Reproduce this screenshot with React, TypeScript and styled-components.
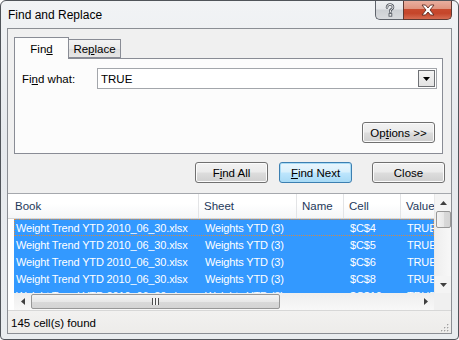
import React from 'react'
import styled, { createGlobalStyle } from 'styled-components'

const GlobalStyle = createGlobalStyle`
  html, body {
    margin: 0;
    padding: 0;
    background: #ffffff;
  }
  body {
    font-family: "Liberation Sans", Arial, sans-serif;
    font-size: 11px;
    color: #000;
  }
  * {
    box-sizing: border-box;
  }
`

const rows = [
  { book: 'Weight Trend YTD 2010_06_30.xlsx', sheet: 'Weights YTD (3)', name: '', cell: '$C$4', value: 'TRUE' },
  { book: 'Weight Trend YTD 2010_06_30.xlsx', sheet: 'Weights YTD (3)', name: '', cell: '$C$5', value: 'TRUE' },
  { book: 'Weight Trend YTD 2010_06_30.xlsx', sheet: 'Weights YTD (3)', name: '', cell: '$C$6', value: 'TRUE' },
  { book: 'Weight Trend YTD 2010_06_30.xlsx', sheet: 'Weights YTD (3)', name: '', cell: '$C$8', value: 'TRUE' },
  { book: 'Weight Trend YTD 2010_06_30.xlsx', sheet: 'Weights YTD (3)', name: '', cell: '$C$10', value: 'TRUE' },
]

const columns = [
  { key: 'book', title: 'Book', width: 191 },
  { key: 'sheet', title: 'Sheet', width: 98 },
  { key: 'name', title: 'Name', width: 47 },
  { key: 'cell', title: 'Cell', width: 57 },
  { key: 'value', title: 'Value', width: 60 },
]

const HelpIcon = () => (
  <svg width="12" height="14" viewBox="0 0 12 14">
    <path
      d="M3 4.5 C3 2.5 4.5 1.5 6 1.5 C7.8 1.5 9 2.6 9 4.2 C9 5.8 7.2 6.3 6.4 7.3 L6.4 9"
      fill="none"
      stroke="#555a62"
      strokeWidth="2.6"
      strokeLinecap="round"
    />
    <path
      d="M3 4.5 C3 2.5 4.5 1.5 6 1.5 C7.8 1.5 9 2.6 9 4.2 C9 5.8 7.2 6.3 6.4 7.3 L6.4 9"
      fill="none"
      stroke="#f4f4f4"
      strokeWidth="1"
      strokeLinecap="round"
    />
    <rect x="5" y="10.6" width="2.8" height="2.6" fill="#f4f4f4" stroke="#555a62" strokeWidth="0.9" />
  </svg>
)

const CloseIcon = () => (
  <svg width="16" height="12" viewBox="0 0 16 12">
    <path
      d="M2 1 L5.5 1 L8 4 L10.5 1 L14 1 L10 6 L14 11 L10.5 11 L8 8 L5.5 11 L2 11 L6 6 Z"
      fill="#ffffff"
      stroke="#5b2b22"
      strokeWidth="0.9"
      strokeLinejoin="round"
    />
  </svg>
)

const ArrowDown = () => (
  <svg width="7" height="4" viewBox="0 0 7 4">
    <path d="M0 0 L7 0 L3.5 4 Z" fill="#000" />
  </svg>
)

const ScrollArrow = ({ dir }: { dir: 'up' | 'down' | 'left' | 'right' }) => {
  const paths: Record<string, string> = {
    up: 'M0 4 L7 4 L3.5 0 Z',
    down: 'M0 0 L7 0 L3.5 4 Z',
    left: 'M4 0 L4 7 L0 3.5 Z',
    right: 'M0 0 L0 7 L4 3.5 Z',
  }
  const horiz = dir === 'left' || dir === 'right'
  return (
    <svg width={horiz ? 4 : 7} height={horiz ? 7 : 4} viewBox={horiz ? '0 0 4 7' : '0 0 7 4'}>
      <path d={paths[dir]} fill="#404040" />
    </svg>
  )
}

const App: React.FC = () => {
  return (
    <>
      <GlobalStyle />
      <Window>
        <TitleBar>
          <Title>Find and Replace</Title>
          <Caption>
            <HelpButton>
              <HelpIcon />
            </HelpButton>
            <CloseButton>
              <CloseIcon />
            </CloseButton>
          </Caption>
        </TitleBar>

        <Client>
          <TabSection>
            <TabStrip>
              <Tab $active>
                Fin<u>d</u>
              </Tab>
              <Tab>
                Re<u>p</u>lace
              </Tab>
            </TabStrip>
            <TabPanel>
              <FindRow>
                <FieldLabel>
                  Fi<u>n</u>d what:
                </FieldLabel>
                <Combo>
                  <ComboText>TRUE</ComboText>
                  <ComboButton>
                    <ArrowDown />
                  </ComboButton>
                </Combo>
              </FindRow>
              <OptionsRow>
                <Button $width={73}>
                  Op<u>t</u>ions &gt;&gt;
                </Button>
              </OptionsRow>
            </TabPanel>
          </TabSection>

          <ButtonRow>
            <Button $width={73}>
              F<u>i</u>nd All
            </Button>
            <Button $width={73} $default>
              <u>F</u>ind Next
            </Button>
            <Button $width={73} $gapLeft={9}>
              Close
            </Button>
          </ButtonRow>

          <ListBox>
            <ListMain>
              <ListView>
                <HeaderRow>
                  {columns.map((c, i) => (
                    <HeaderCell key={c.key} style={{ width: c.width }} $first={i === 0}>
                      {c.title}
                    </HeaderCell>
                  ))}
                </HeaderRow>
                <Rows>
                  {rows.map((r, idx) => (
                    <Row key={idx} $focused={idx === 0}>
                      {columns.map((c, i) => (
                        <Cell key={c.key} style={{ width: i === 0 ? c.width - 6 : c.width }} $first={i === 0}>
                          {(r as Record<string, string>)[c.key]}
                        </Cell>
                      ))}
                    </Row>
                  ))}
                </Rows>
              </ListView>
              <VScroll>
                <ArrowBox>
                  <ScrollArrow dir="up" />
                </ArrowBox>
                <VTrack>
                  <VThumb />
                </VTrack>
                <ArrowBox>
                  <ScrollArrow dir="down" />
                </ArrowBox>
              </VScroll>
            </ListMain>
            <HScrollRow>
              <HScroll>
                <ArrowBox>
                  <ScrollArrow dir="left" />
                </ArrowBox>
                <HTrack>
                  <HThumb>
                    <Grip />
                  </HThumb>
                </HTrack>
                <ArrowBox>
                  <ScrollArrow dir="right" />
                </ArrowBox>
              </HScroll>
              <Corner />
            </HScrollRow>
          </ListBox>

          <StatusBar>
            <StatusText>145 cell(s) found</StatusText>
            <SizeGrip>
              <svg width="10" height="10" viewBox="0 0 10 10">
                {[
                  [8, 2],
                  [5, 5],
                  [8, 5],
                  [2, 8],
                  [5, 8],
                  [8, 8],
                ].map(([x, y], i) => (
                  <React.Fragment key={i}>
                    <rect x={x + 0.6} y={y + 0.6} width="1.4" height="1.4" fill="#ffffff" />
                    <rect x={x} y={y} width="1.4" height="1.4" fill="#a0a0a0" />
                  </React.Fragment>
                ))}
              </svg>
            </SizeGrip>
          </StatusBar>
        </Client>
      </Window>
    </>
  )
}

const Window = styled.div`
  width: 459px;
  height: 340px;
  display: flex;
  flex-direction: column;
  border: 1px solid #50545a;
  border-radius: 6px 6px 4px 4px;
  background: linear-gradient(180deg, #f1f3f5 0%, #e6e9ed 40%, #e9ecef 100%);
  padding: 0 6px 5px 6px;
  overflow: hidden;
`

const TitleBar = styled.div`
  height: 27px;
  display: flex;
  justify-content: space-between;
  align-items: flex-start;
`

const Title = styled.div`
  padding: 7px 0 0 1px;
  font-size: 12px;
  line-height: 15px;
  color: #000;
`

const Caption = styled.div`
  display: flex;
  margin-top: -1px;
  margin-right: 0;
`

const HelpButton = styled.div`
  width: 28px;
  height: 20px;
  display: flex;
  align-items: center;
  justify-content: center;
  border: 1px solid #5f646c;
  border-top: none;
  border-right: none;
  border-radius: 0 0 0 5px;
  background: linear-gradient(180deg, #eef0f2 0%, #e4e6e9 48%, #cdd0d4 52%, #d9dbde 100%);
`

const CloseButton = styled.div`
  width: 49px;
  height: 20px;
  display: flex;
  align-items: center;
  justify-content: center;
  border: 1px solid #5f3a33;
  border-top: none;
  border-radius: 0 0 5px 0;
  background: linear-gradient(180deg, #eab2a3 0%, #e09580 45%, #c84a2e 50%, #c5452a 70%, #d66c52 100%);
`

const Client = styled.div`
  flex: 1;
  display: flex;
  flex-direction: column;
  border: 1px solid #8b8e94;
  background: #f0f0f0;
  min-height: 0;
`

const TabSection = styled.div`
  margin: 8px 8px 0 6px;
  display: flex;
  flex-direction: column;
`

const TabStrip = styled.div`
  display: flex;
  align-items: flex-end;
  height: 21px;
  position: relative;
  z-index: 1;
`

const Tab = styled.div<{ $active?: boolean }>`
  display: flex;
  align-items: center;
  justify-content: center;
  width: ${(p) => (p.$active ? 55 : 52)}px;
  height: ${(p) => (p.$active ? 22 : 19)}px;
  margin-bottom: ${(p) => (p.$active ? -1 : 0)}px;
  border: 1px solid #898c95;
  border-bottom: ${(p) => (p.$active ? 'none' : '1px solid #898c95')};
  border-left: ${(p) => (p.$active ? '1px solid #898c95' : 'none')};
  background: ${(p) => (p.$active ? '#fcfcfc' : 'linear-gradient(180deg, #f3f3f3 0%, #ebebeb 50%, #dedede 51%, #e6e6e6 100%)')};
  padding-top: ${(p) => (p.$active ? 0 : 1)}px;
  font-size: 11.5px;
  line-height: 14px;
`

const TabPanel = styled.div`
  height: 96px;
  display: flex;
  flex-direction: column;
  border: 1px solid #898c95;
  background: #fcfcfc;
  padding: 9px 5px 0 7px;
`

const FindRow = styled.div`
  display: flex;
  align-items: center;
  height: 21px;
`

const FieldLabel = styled.div`
  width: 75px;
  font-size: 11.5px;
`

const Combo = styled.div`
  flex: 1;
  height: 21px;
  display: flex;
  align-items: center;
  justify-content: space-between;
  border: 1px solid #a3a6ab;
  background: #ffffff;
  padding: 0 1px 0 3px;
`

const ComboText = styled.span`
  font-size: 11.5px;
`

const ComboButton = styled.div`
  width: 17px;
  height: 17px;
  display: flex;
  align-items: center;
  justify-content: center;
  border: 1px solid #6f7175;
  background: linear-gradient(180deg, #f4f4f4 0%, #e3e3e3 100%);
`

const OptionsRow = styled.div`
  margin-top: auto;
  margin-bottom: 10px;
  padding-right: 2px;
  display: flex;
  justify-content: flex-end;
`

const Button = styled.div<{ $width: number; $default?: boolean; $gapLeft?: number }>`
  width: ${(p) => p.$width}px;
  height: 21px;
  margin-left: ${(p) => p.$gapLeft ?? 0}px;
  display: flex;
  align-items: center;
  justify-content: center;
  border: 1px solid ${(p) => (p.$default ? '#3c7fb1' : '#707070')};
  border-radius: 3px;
  box-shadow: ${(p) => (p.$default ? 'inset 0 0 0 1px #a9dcf6' : 'inset 0 0 0 1px #fbfbfb')};
  background: ${(p) =>
    p.$default
      ? 'linear-gradient(180deg, #eaf6fd 0%, #d9f0fc 48%, #bee6fd 52%, #a7d9f5 100%)'
      : 'linear-gradient(180deg, #f2f2f2 0%, #ebebeb 48%, #dddddd 52%, #cfcfcf 100%)'};
  font-size: 11.5px;
  line-height: 14px;
`

const ButtonRow = styled.div`
  display: flex;
  justify-content: flex-end;
  gap: 11px;
  margin: 8px 6px 0 0;
  height: 22px;
  align-items: flex-start;
`

const ListBox = styled.div`
  margin-top: 9px;
  display: flex;
  flex-direction: column;
  background: #ffffff;
  border-top: 1px solid #a5a8ad;
`

const ListMain = styled.div`
  display: flex;
`

const ListView = styled.div`
  flex: 1;
  overflow: hidden;
  display: flex;
  flex-direction: column;
`

const HeaderRow = styled.div`
  display: flex;
  height: 25px;
  background: linear-gradient(180deg, #ffffff 0%, #ffffff 40%, #f5f6f7 100%);
  border-bottom: 1px solid #d5d5d5;
  white-space: nowrap;
`

const HeaderCell = styled.div<{ $first?: boolean }>`
  flex: none;
  display: flex;
  align-items: center;
  padding-left: ${(p) => (p.$first ? 7 : 5)}px;
  padding-bottom: 1px;
  border-right: 1px solid #e3e4e6;
  font-size: 11.5px;
  color: #1e395b;
  overflow: hidden;
`

const Rows = styled.div`
  height: 74px;
  overflow: hidden;
  padding-left: 6px;
`

const Row = styled.div<{ $focused?: boolean }>`
  display: flex;
  height: 17px;
  background: #3399ff;
  color: #ffffff;
  white-space: nowrap;
  outline: ${(p) => (p.$focused ? '1px dotted #d08a4a' : 'none')};
  outline-offset: -1px;
`

const Cell = styled.div<{ $first?: boolean }>`
  flex: none;
  display: flex;
  align-items: center;
  padding-left: ${(p) => (p.$first ? 2 : 6)}px;
  font-size: 11px;
  letter-spacing: -0.15px;
  overflow: hidden;
`

const VScroll = styled.div`
  width: 17px;
  display: flex;
  flex-direction: column;
  background: #f4f4f4;
  border-left: 1px solid #e9e9e9;
`

const ArrowBox = styled.div`
  width: 17px;
  height: 17px;
  flex: none;
  display: flex;
  align-items: center;
  justify-content: center;
`

const VTrack = styled.div`
  flex: 1;
  display: flex;
  flex-direction: column;
  align-items: center;
  background: linear-gradient(90deg, #eeeeee 0%, #f8f8f8 100%);
`

const VThumb = styled.div`
  width: 15px;
  height: 17px;
  border: 1px solid #979797;
  border-radius: 2px;
  background: linear-gradient(90deg, #f3f3f3 0%, #e8e8e8 50%, #d9d9d9 51%, #d4d4d4 100%);
`

const HScrollRow = styled.div`
  display: flex;
  height: 17px;
  padding-left: 6px;
`

const HScroll = styled.div`
  flex: 1;
  display: flex;
  background: linear-gradient(180deg, #eeeeee 0%, #f8f8f8 100%);
`

const HTrack = styled.div`
  flex: 1;
  display: flex;
  align-items: center;
`

const HThumb = styled.div`
  width: 249px;
  height: 15px;
  display: flex;
  align-items: center;
  justify-content: center;
  border: 1px solid #979797;
  border-radius: 2px;
  background: linear-gradient(180deg, #f3f3f3 0%, #e8e8e8 50%, #d9d9d9 51%, #d4d4d4 100%);
`

const Grip = styled.div`
  width: 7px;
  height: 7px;
  background: repeating-linear-gradient(90deg, #4d4d4d 0px, #4d4d4d 1px, #f4f4f4 1px, #f4f4f4 3px);
`

const Corner = styled.div`
  width: 17px;
  background: #f0f0f0;
`

const StatusBar = styled.div`
  flex: 1;
  display: flex;
  align-items: center;
  justify-content: space-between;
  border-top: 1px solid #d7d7d7;
  background: linear-gradient(180deg, #f2f1f0 0%, #edecea 100%);
  padding: 0 2px 0 3px;
`

const StatusText = styled.span`
  font-size: 11.5px;
  padding-top: 1px;
`

const SizeGrip = styled.div`
  align-self: flex-end;
  width: 10px;
  height: 10px;
  margin-bottom: 1px;
  display: flex;
`

export default App
